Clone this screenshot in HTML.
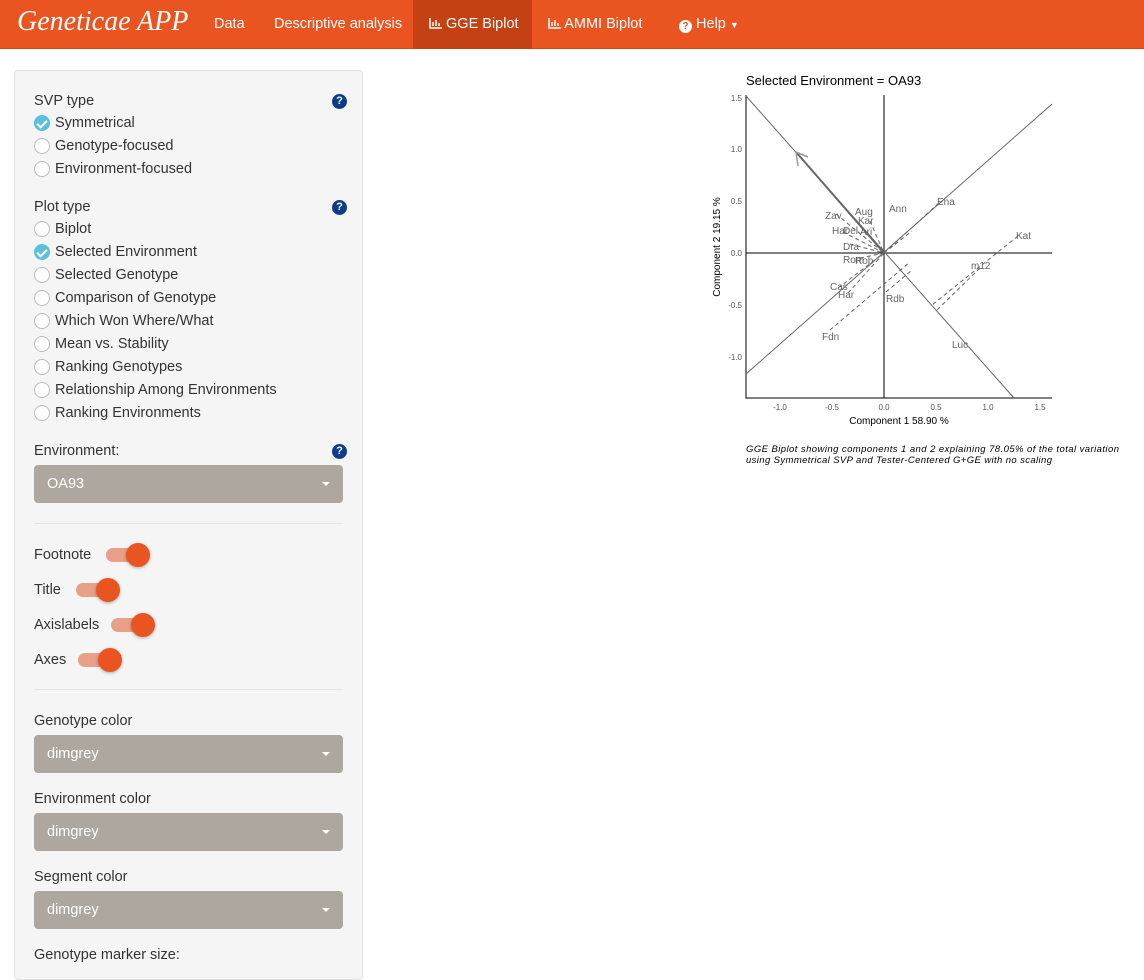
<!DOCTYPE html>
<html><head><meta charset="utf-8"><style>
*{box-sizing:border-box;margin:0;padding:0}
body{width:1144px;height:966px;overflow:hidden;background:#fff;font-family:"Liberation Sans",sans-serif;font-size:14.5px;color:#333;position:relative}
.nav{position:absolute;left:0;top:0;width:1144px;height:49px;background:#e95420;border-bottom:1px solid #d04a18}
.nav span{position:absolute;top:16px;color:#fff;font-size:14.5px}
.brand{position:absolute;left:17px;top:6px;color:#fff;font-family:"Liberation Serif",serif;font-style:italic;font-size:28px}
.active{position:absolute;left:413px;top:0;width:119px;height:49px;background:#c34113}
.panel{position:absolute;left:14px;top:70px;width:349px;height:910px;background:#f5f5f5;border:1px solid #e3e3e3;border-radius:4px}
.t{position:absolute;font-size:14.5px;color:#333;white-space:nowrap}
.lbl{color:#333}
.r{position:absolute;left:34px;width:16px;height:16px;border-radius:50%;border:1px solid #bbb;background:#fff}
.r.on{background:#5bc0de;border-color:#5bc0de}
.r.on:after{content:"";position:absolute;left:4px;top:2px;width:4px;height:8px;border:solid #fff;border-width:0 2px 2px 0;transform:rotate(45deg)}
.q{position:absolute;left:332px;width:15px;height:15px;border-radius:50%;background:#0d3c8a;color:#fff;font-size:11px;font-weight:bold;text-align:center;line-height:15px}
.sel{position:absolute;left:34px;width:309px;height:38px;background:#aea79f;border-radius:4px;color:#fff;padding:11px 13px;font-size:14.5px}
.sel:after{content:"";position:absolute;right:13px;top:17px;border:4px solid transparent;border-top:4px solid #fff}
.hr{position:absolute;left:34px;width:309px;height:1px;background:#e5e5e5}
.tg{position:absolute;width:34px;height:14px;border-radius:7px;background:#e8a088}
.tg:after{content:"";position:absolute;right:-10px;top:-5px;width:24px;height:24px;border-radius:50%;background:#e95420;box-shadow:0 1px 3px rgba(0,0,0,.3)}
</style></head><body>
<div class="nav">
<div class="active"></div>
<div class="brand">Geneticae APP</div>
<span style="left:214px">Data</span>
<span style="left:274px">Descriptive analysis</span>
<span style="left:429px"><svg width="13" height="11" style="vertical-align:-1px"><path d="M1 0V10H13M4 4V8M7 2V8M10 5V8" stroke="#fff" stroke-width="1.5" fill="none"/></svg> GGE Biplot</span>
<span style="left:548px"><svg width="13" height="11" style="vertical-align:-1px"><path d="M1 0V10H13M4 4V8M7 2V8M10 5V8" stroke="#fff" stroke-width="1.5" fill="none"/></svg> AMMI Biplot</span>
<span style="left:679px"><b style="display:inline-block;width:13px;height:13px;border-radius:50%;background:#fff;color:#e95420;font-size:10px;text-align:center;line-height:13px;vertical-align:-1px">?</b> Help <span style="position:static;font-size:9px">&#9660;</span></span>
</div>
<div class="panel"></div>
<div class="t lbl" style="left:34px;top:93px">SVP type</div><div class="q" style="top:94px">?</div>
<div class="r on" style="top:115px"></div><div class="t" style="left:55px;top:115px">Symmetrical</div>
<div class="r" style="top:138px"></div><div class="t" style="left:55px;top:138px">Genotype-focused</div>
<div class="r" style="top:161px"></div><div class="t" style="left:55px;top:161px">Environment-focused</div>
<div class="t lbl" style="left:34px;top:199px">Plot type</div><div class="q" style="top:200px">?</div>
<div class="r" style="top:221px"></div><div class="t" style="left:55px;top:221px">Biplot</div>
<div class="r on" style="top:244px"></div><div class="t" style="left:55px;top:244px">Selected Environment</div>
<div class="r" style="top:267px"></div><div class="t" style="left:55px;top:267px">Selected Genotype</div>
<div class="r" style="top:290px"></div><div class="t" style="left:55px;top:290px">Comparison of Genotype</div>
<div class="r" style="top:313px"></div><div class="t" style="left:55px;top:313px">Which Won Where/What</div>
<div class="r" style="top:336px"></div><div class="t" style="left:55px;top:336px">Mean vs. Stability</div>
<div class="r" style="top:359px"></div><div class="t" style="left:55px;top:359px">Ranking Genotypes</div>
<div class="r" style="top:382px"></div><div class="t" style="left:55px;top:382px">Relationship Among Environments</div>
<div class="r" style="top:405px"></div><div class="t" style="left:55px;top:405px">Ranking Environments</div>
<div class="t lbl" style="left:34px;top:443px">Environment:</div><div class="q" style="top:444px">?</div>
<div class="sel" style="top:465px">OA93</div>
<div class="hr" style="top:523px"></div>
<div class="t" style="left:34px;top:547px">Footnote</div><div class="tg" style="left:106px;top:548px"></div>
<div class="t" style="left:34px;top:582px">Title</div><div class="tg" style="left:76px;top:583px"></div>
<div class="t" style="left:34px;top:617px">Axislabels</div><div class="tg" style="left:111px;top:618px"></div>
<div class="t" style="left:34px;top:652px">Axes</div><div class="tg" style="left:78px;top:653px"></div>
<div class="hr" style="top:689px"></div>
<div class="t lbl" style="left:34px;top:713px">Genotype color</div>
<div class="sel" style="top:735px">dimgrey</div>
<div class="t lbl" style="left:34px;top:791px">Environment color</div>
<div class="sel" style="top:813px">dimgrey</div>
<div class="t lbl" style="left:34px;top:869px">Segment color</div>
<div class="sel" style="top:891px">dimgrey</div>
<div class="t lbl" style="left:34px;top:947px">Genotype marker size:</div>

<svg style="position:absolute;left:0;top:0" width="1144" height="966" font-family="Liberation Sans,sans-serif">
<text x="746" y="85" font-size="13" fill="#000">Selected Environment = OA93</text>
<g stroke="#000" stroke-width="1" fill="none">
<path d="M746 95V398H1052"/>
<path d="M884 95V398M746 253H1052"/>
</g>
<g stroke="#666" stroke-width="1" fill="none">
<path d="M746 96L1014 398"/>
<path d="M746 374L1052 104"/>
<path d="M884 253L796 152" stroke-width="2"/>
<path d="M796 152L808 157M796 152L798 166" stroke="#999" stroke-width="1.5"/>
<g stroke-dasharray="4,3">
<path d="M836 214L884 253M870 221L884 253M843 232L884 253M850 244L884 253M860 258L884 253M838 288L884 253M848 293L884 253"/>
<path d="M884 253L940 202M884 253L912 231"/>
<path d="M830 330L910 262M886 292L912 270"/>
<path d="M1018 236L932 305M980 268L937 310"/>
</g>
</g>
<g font-size="10" fill="#666">
<text x="825" y="219">Zav</text><text x="855" y="215">Aug</text><text x="889" y="212">Ann</text><text x="937" y="205">Ena</text>
<text x="858" y="224">Kar</text><text x="832" y="234">Har</text><text x="843" y="234">Del</text><text x="860" y="235">Ari</text>
<text x="843" y="250">Dra</text><text x="1016" y="239">Kat</text><text x="843" y="263">Rom</text><text x="855" y="264">Rob</text>
<text x="971" y="269">m12</text><text x="830" y="290">Cas</text><text x="838" y="298">Har</text><text x="886" y="302">Rdb</text>
<text x="822" y="340">Fdn</text><text x="952" y="348">Luc</text>
</g>
<g font-size="8" fill="#555" text-anchor="end">
<text x="742" y="101">1.5</text><text x="742" y="152">1.0</text><text x="742" y="204">0.5</text><text x="742" y="256">0.0</text><text x="742" y="308">-0.5</text><text x="742" y="360">-1.0</text>
</g>
<g font-size="8" fill="#555" text-anchor="middle">
<text x="780" y="410">-1.0</text><text x="832" y="410">-0.5</text><text x="884" y="410">0.0</text><text x="936" y="410">0.5</text><text x="988" y="410">1.0</text><text x="1040" y="410">1.5</text>
</g>
<text x="899" y="424" font-size="10" text-anchor="middle" fill="#000">Component 1 58.90 %</text>
<text transform="translate(720,247) rotate(-90)" font-size="10" text-anchor="middle" fill="#000">Component 2 19.15 %</text>
<text x="746" y="452" font-size="9.5" font-style="italic" fill="#000" textLength="373">GGE Biplot showing components 1 and 2 explaining 78.05% of the total variation</text>
<text x="746" y="463" font-size="9.5" font-style="italic" fill="#000" textLength="306">using Symmetrical SVP and Tester-Centered G+GE with no scaling</text>
</svg>
</body></html>
